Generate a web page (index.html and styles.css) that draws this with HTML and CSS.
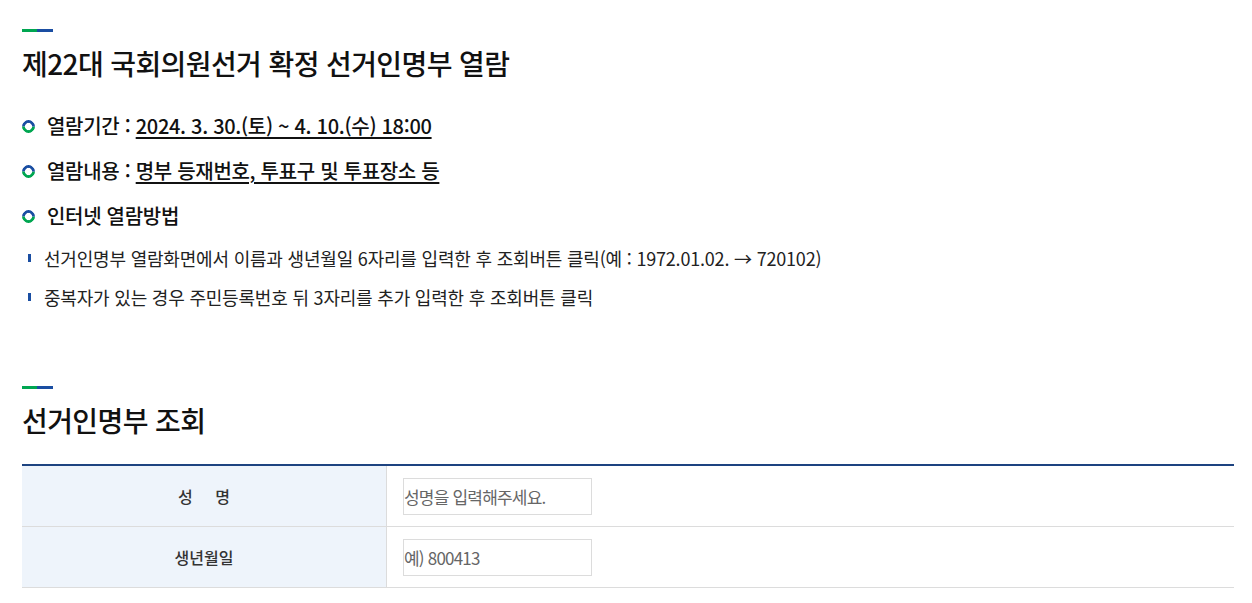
FILE: index.html
```html
<!DOCTYPE html>
<html lang="ko">
<head>
<meta charset="utf-8">
<title>선거인명부 열람</title>
<link rel="stylesheet" href="styles.css">
</head>
<body>
<div class="page">
  <section class="section first">
    <div class="accent"></div>
    <h2 class="title">제22대 국회의원선거 확정 선거인명부 열람</h2>
    <ul class="dot-list">
      <li><span class="ring"></span><span>열람기간 : <u>2024. 3. 30.(토) ~ 4. 10.(수) 18:00</u></span></li>
      <li><span class="ring"></span><span>열람내용 : <u>명부 등재번호, 투표구 및 투표장소 등</u></span></li>
      <li><span class="ring"></span><span>인터넷 열람방법</span></li>
    </ul>
    <ul class="bar-list">
      <li><span class="bar"></span><span>선거인명부 열람화면에서 이름과 생년월일 6자리를 입력한 후 조회버튼 클릭(예 : 1972.01.02. → 720102)</span></li>
      <li><span class="bar"></span><span>중복자가 있는 경우 주민등록번호 뒤 3자리를 추가 입력한 후 조회버튼 클릭</span></li>
    </ul>
  </section>
  <section class="section second">
    <div class="accent"></div>
    <h2 class="title">선거인명부 조회</h2>
    <div class="form-table">
      <div class="row">
        <div class="label">성&nbsp;&nbsp;&nbsp;&nbsp;&nbsp;명</div>
        <div class="field"><input class="input" type="text" placeholder="성명을 입력해주세요."></div>
      </div>
      <div class="row">
        <div class="label">생년월일</div>
        <div class="field"><input class="input" type="text" placeholder="예) 800413"></div>
      </div>
    </div>
  </section>
</div>
</body>
</html>
```
FILE: styles.css
```css
* { box-sizing: border-box; }
html, body { margin: 0; padding: 0; background: #fff; }
body {
  font-family: "Noto Sans CJK KR", "Noto Sans", sans-serif;
  color: #111;
}
.page { padding: 0 18px 0 22px; }
.section.first { padding-top: 29px; }
.section.second { padding-top: 76px; }
.accent {
  width: 31px;
  height: 3px;
  background: linear-gradient(to right, #00a651 0, #00a651 50%, #1a4ea2 50%, #1a4ea2 100%);
}
.title {
  margin: 13px 0 0;
  font-size: 28px;
  line-height: 36px;
  font-weight: 500;
  letter-spacing: -0.6px;
  color: #111;
}
.dot-list { list-style: none; margin: 31px 0 0; padding: 0; }
.dot-list li {
  display: flex;
  align-items: center;
  gap: 12px;
  font-size: 20px;
  line-height: 27px;
  font-weight: 500;
  letter-spacing: -0.3px;
  margin-bottom: 18px;
}
.dot-list li:last-child { margin-bottom: 0; }
.dot-list u { text-underline-offset: 3px; text-decoration-thickness: 1.5px; }
.ring {
  width: 13px;
  height: 13px;
  border-radius: 50%;
  border: 3px solid #1a4ea2;
  border-bottom-color: #00a651;
  border-left-color: #00a651;
  transform: rotate(-45deg);
  flex: none;
  margin-top: 1px;
}
.bar-list { list-style: none; margin: 16px 0 0; padding: 0; }
.bar-list li {
  display: flex;
  align-items: center;
  font-size: 18px;
  line-height: 26px;
  letter-spacing: -0.2px;
  color: #222;
  margin-bottom: 13px;
}
.bar-list li:last-child { margin-bottom: 0; }
.bar {
  width: 3px;
  height: 8px;
  background: #1a4ea2;
  margin: 0 13px 0 6px;
  flex: none;
}
.form-table {
  margin-top: 26px;
  border-top: 2px solid #1d4380;
}
.row {
  display: grid;
  grid-template-columns: 365px 1fr;
  height: 61px;
  border-bottom: 1px solid #dcdcdc;
}
.label {
  background: #eef4fb;
  border-right: 1px solid #dcdcdc;
  display: flex;
  align-items: center;
  justify-content: center;
  font-size: 16px;
  font-weight: 500;
  color: #333;
}
.field {
  display: flex;
  align-items: center;
  padding-left: 16px;
}
.input {
  width: 189px;
  height: 37px;
  border: 1px solid #dcdcdc;
  padding: 0;
  font-family: "Noto Sans CJK KR", sans-serif;
  font-size: 17px;
  letter-spacing: -0.8px;
  color: #333;
  outline: none;
}
.input::placeholder { color: #666; }
```
